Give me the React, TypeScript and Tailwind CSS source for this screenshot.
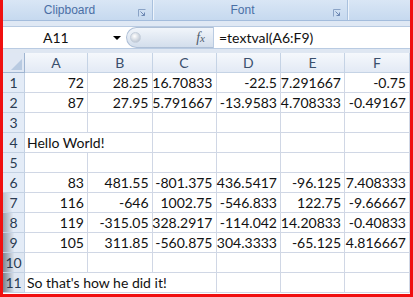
import React from 'react';

const rows: string[][] = [
  ['72', '28.25', '16.70833', '-22.5', '7.291667', '-0.75'],
  ['87', '27.95', '5.791667', '-13.9583', '4.708333', '-0.49167'],
  [],
  ['Hello World!'],
  [],
  ['83', '481.55', '-801.375', '436.5417', '-96.125', '7.408333'],
  ['116', '-646', '1002.75', '-546.833', '122.75', '-9.66667'],
  ['119', '-315.05', '328.2917', '-114.042', '14.20833', '-0.40833'],
  ['105', '311.85', '-560.875', '304.3333', '-65.125', '4.816667'],
  [],
  ["So that's how he did it!"],
];

// shadow that falls over the lower row headers
const headerShade: Record<number, string> = {
  7: 'bg-[linear-gradient(to_right,#b9c1cc,#e4ecf7_45%)]',
  8: 'bg-[linear-gradient(to_right,#9aa3ae,#e4ecf7_50%)]',
  9: 'bg-[linear-gradient(to_right,#9099a5,#e4ecf7_55%)]',
  10: 'bg-[linear-gradient(to_right,#7f8893,#dfe7f2_55%)]',
  11: 'bg-[linear-gradient(to_right,#7a838e,#dfe7f2_55%)]',
};

const Launcher = () => (
  <svg width="8" height="8" viewBox="0 0 8 8" className="shrink-0">
    <path d="M0.5 7.5V0.5H7.5" fill="none" stroke="#8aa3c6" strokeWidth="1" />
    <path d="M2.5 2.5L6.5 6.5M6.5 3.5V6.5H3.5" fill="none" stroke="#6d88b3" strokeWidth="1" />
  </svg>
);

const Separator = () => (
  <div className="flex h-full shrink-0">
    <div className="w-px bg-[#a9c1de]" />
    <div className="w-px bg-[#eef4fb]" />
  </div>
);

const RibbonGroup = ({ label, className }: { label: string; className: string }) => (
  <div className={`relative flex h-full items-center justify-center pr-[16px] ${className}`}>
    <span className="text-[12px] text-[#4a6fa5] font-['Liberation_Sans',Arial,sans-serif] pb-px">{label}</span>
    <div className="absolute right-[6px] top-[9px]">
      <Launcher />
    </div>
  </div>
);

export default function App() {
  return (
    <div className="w-[413px] h-[297px] bg-[#f01010] pl-[3px] pr-[3px] pb-[3px] overflow-hidden">
      <div className="h-full flex flex-col bg-white overflow-hidden font-[Lato,sans-serif] text-[#111]">
        {/* Ribbon group labels */}
        <div className="h-[21px] flex shrink-0 bg-[linear-gradient(to_bottom,#d9e6f5,#c6d9ef)] border-b border-[#a3bcdc]">
          <RibbonGroup label="Clipboard" className="w-[149px]" />
          <Separator />
          <RibbonGroup label="Font" className="w-[193px]" />
          <Separator />
          <div className="flex-1" />
        </div>
        <div className="h-[5px] shrink-0 bg-[#dfe8f4]" />

        {/* Formula bar */}
        <div className="h-[23px] flex shrink-0 bg-white border-y border-[#b9cbe2]">
          <div className="w-[123px] flex items-center shrink-0">
            <span className="flex-1 text-[14px] pl-[40px]">A11</span>
            <div className="w-0 h-0 border-l-[4px] border-r-[4px] border-t-[4px] border-l-transparent border-r-transparent border-t-black mr-[5px]" />
          </div>
          <div className="w-[87px] shrink-0 flex items-center rounded-l-full bg-[linear-gradient(to_bottom,#f1f5fa,#d3deec)] border border-[#aebfd6] border-r-0">
            <div className="ml-[3px] w-[11px] h-[11px] rounded-full bg-[radial-gradient(circle_at_40%_35%,#ffffff,#aab6c6)] border border-[#c5cfdc]" />
            <div className="flex-1" />
            <span className="mr-[8px] text-[14px] italic text-[#4f5c6e] font-['Liberation_Serif',serif] leading-none">
              f<span className="text-[11px]">x</span>
            </span>
          </div>
          <div className="flex-1 flex items-center border-l border-[#b9cbe2] pl-[5px] text-[14px]">
            =textval(A6:F9)
          </div>
        </div>
        <div className="h-[4px] shrink-0 bg-[#dfe7f2]" />

        {/* Sheet */}
        <div className="grid grid-cols-[22px_63px_64.5px_64px_64.5px_64px_1fr] auto-rows-[20px] text-[14px]">
          <div className="relative bg-[#dfe7f3] border-r border-b border-[#9fb5d1]">
            <svg width="11" height="11" viewBox="0 0 11 11" className="absolute right-[2px] bottom-[2px]">
              <path d="M11 0V11H0Z" fill="#b8cae1" />
            </svg>
          </div>
          {['A', 'B', 'C', 'D', 'E', 'F'].map((c) => (
            <div
              key={c}
              className="flex items-center justify-center bg-[linear-gradient(to_bottom,#f5f8fc,#e3eaf5)] border-r border-b border-[#c5d3e5] text-[#3a4f6c] text-[14px] leading-none"
            >
              {c}
            </div>
          ))}

          {rows.map((row, i) => {
            const n = i + 1;
            const isText = row.length === 1;
            return (
              <React.Fragment key={n}>
                <div
                  className={`flex items-center justify-center pb-[1px] border-r border-b border-[#c3d1e3] text-[#2a3b52] ${
                    headerShade[n] ?? 'bg-[#e4ecf7]'
                  }`}
                >
                  {n}
                </div>
                {isText ? (
                  <>
                    <div
                      className={`flex items-center pb-[1px] pl-[2px] border-r border-b border-[#d0d7e5] whitespace-nowrap ${
                        n === 11 ? 'col-span-3' : 'col-span-2'
                      }`}
                    >
                      {row[0]}
                    </div>
                    {Array.from({ length: n === 11 ? 3 : 4 }).map((_, k) => (
                      <div key={k} className="border-r border-b border-[#d0d7e5]" />
                    ))}
                  </>
                ) : (
                  Array.from({ length: 6 }).map((_, k) => (
                    <div
                      key={k}
                      className="flex items-center justify-end pb-[1px] pr-[3px] border-r border-b border-[#d0d7e5] whitespace-nowrap"
                    >
                      {row[k] ?? ''}
                    </div>
                  ))
                )}
              </React.Fragment>
            );
          })}
        </div>
      </div>
    </div>
  );
}
